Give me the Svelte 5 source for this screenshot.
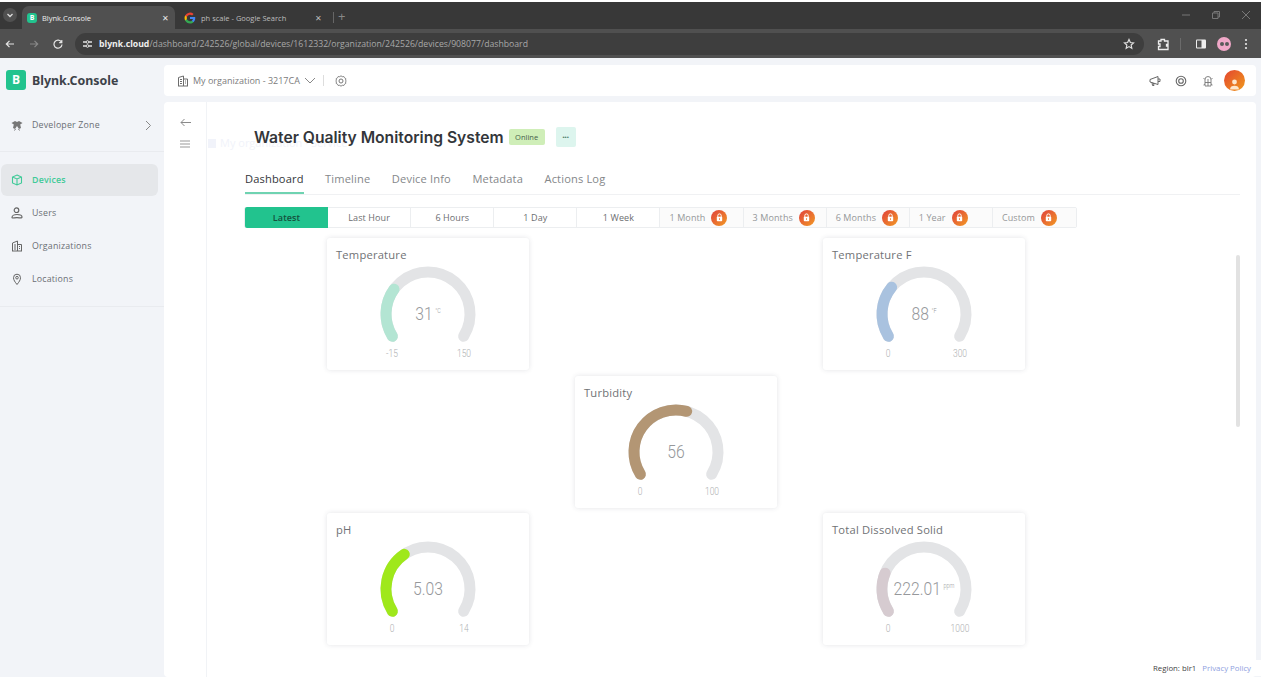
<script>
  const tabs = ['Dashboard', 'Timeline', 'Device Info', 'Metadata', 'Actions Log'];
  const ranges = [
    { label: 'Latest', active: true },
    { label: 'Last Hour' },
    { label: '6 Hours' },
    { label: '1 Day' },
    { label: '1 Week' },
    { label: '1 Month', locked: true },
    { label: '3 Months', locked: true },
    { label: '6 Months', locked: true },
    { label: '1 Year', locked: true },
    { label: 'Custom', locked: true }
  ];
  const gauges = [
    { title: 'Temperature', value: 31, text: '31', unit: '°C', min: -15, max: 150, color: '#b3e5d3', col: 1, row: 1 },
    { title: 'Temperature F', value: 88, text: '88', unit: '°F', min: 0, max: 300, color: '#a9c2df', col: 3, row: 1 },
    { title: 'Turbidity', value: 56, text: '56', unit: '', min: 0, max: 100, color: '#b39674', col: 2, row: 2 },
    { title: 'pH', value: 5.03, text: '5.03', unit: '', min: 0, max: 14, color: '#9fe81b', col: 1, row: 3 },
    { title: 'Total Dissolved Solid', value: 222.01, text: '222.01', unit: 'ppm', min: 0, max: 1000, color: '#d6cbd0', col: 3, row: 3 }
  ];

  const SWEEP = 244;
  const R = 42;
  const CX = 101;
  const CY = 38;

  function point(deg) {
    // deg runs clockwise along the gauge, 0 is the lower left end
    const a = ((148 + deg) * Math.PI) / 180;
    return `${(CX + R * Math.cos(a)).toFixed(2)} ${(CY + R * Math.sin(a)).toFixed(2)}`;
  }

  function arc(fraction) {
    const deg = SWEEP * fraction;
    return `M${point(0)} A${R} ${R} 0 ${deg > 180 ? 1 : 0} 1 ${point(deg)}`;
  }
</script>

<div class="chrome">
  <div class="tabstrip">
    <span class="tab-menu">
      <svg width="8" height="8" viewBox="0 0 8 8"><path d="M1.500 3l2.500 2.500L6.500 3" fill="none" stroke="#ddd" stroke-width="1.300"/></svg>
    </span>
    <div class="tab active">
      <span class="favicon">B</span>
      <span class="tab-title">Blynk.Console</span>
      <span class="tab-close">✕</span>
    </div>
    <div class="tab">
      <svg class="g" width="12" height="12" viewBox="0 0 24 24">
        <path d="M22.500 12.200c0-.8-.1-1.500-.2-2.200H12v4.200h5.900a5 5 0 0 1-2.200 3.300v2.700h3.500c2.100-1.900 3.300-4.700 3.300-8z" fill="#4285f4"/>
        <path d="M12 23c3 0 5.400-1 7.200-2.700l-3.500-2.700c-1 .7-2.200 1.100-3.700 1.100-2.800 0-5.300-1.900-6.100-4.500H2.300v2.800A11 11 0 0 0 12 23z" fill="#34a853"/>
        <path d="M5.900 14.200a6.600 6.600 0 0 1 0-4.300V7.100H2.300a11 11 0 0 0 0 9.900z" fill="#fbbc05"/>
        <path d="M12 5.400c1.600 0 3 .5 4.100 1.600l3.100-3.100A11 11 0 0 0 2.300 7.100l3.600 2.800C6.700 7.300 9.200 5.400 12 5.400z" fill="#ea4335"/>
      </svg>
      <span class="tab-title">ph scale - Google Search</span>
      <span class="tab-close dim">✕</span>
    </div>
    <span class="tab-sep"></span>
    <span class="tab-plus">+</span>
    <div class="window-btns">
      <svg width="10" height="10" viewBox="0 0 10 10"><path d="M1 5h8" stroke="#777" stroke-width="1"/></svg>
      <svg width="10" height="10" viewBox="0 0 10 10"><path d="M1.500 3h5.500v5.500h-5.500zM3 3V1.500h5.500V7H7" fill="none" stroke="#777" stroke-width="1"/></svg>
      <svg width="10" height="10" viewBox="0 0 10 10"><path d="M1 1l8 8M9 1l-8 8" stroke="#777" stroke-width="1"/></svg>
    </div>
  </div>
  <div class="toolbar">
    <svg width="10" height="10" viewBox="0 0 10 10"><path d="M9 5H1.500M4.500 1.800L1.300 5l3.200 3.200" fill="none" stroke="#e4e4e4" stroke-width="1.200"/></svg>
    <svg width="10" height="10" viewBox="0 0 10 10"><path d="M1 5h7.500M5.500 1.800L8.700 5 5.500 8.200" fill="none" stroke="#888" stroke-width="1.200"/></svg>
    <svg width="10" height="10" viewBox="0 0 10 10"><path d="M8.500 3.200A4 4 0 1 0 9 5.500M8.800 1v2.600H6.200" fill="none" stroke="#e4e4e4" stroke-width="1.200"/></svg>
    <div class="omnibox">
      <svg width="11" height="10" viewBox="0 0 11 10"><path d="M1 3h3M7 3h3M1 7h3M7 7h3" stroke="#e0e0e0" stroke-width="1.500"/><circle cx="5.500" cy="3" r="1.300" fill="none" stroke="#e0e0e0"/><circle cx="5.500" cy="7" r="1.300" fill="none" stroke="#e0e0e0"/></svg>
      <span class="url"><b>blynk.cloud</b>/dashboard/242526/global/devices/1612332/organization/242526/devices/908077/dashboard</span>
      <svg class="star" width="12" height="12" viewBox="0 0 24 24"><path d="M12 3l2.700 6 6.300.7-4.700 4.300 1.300 6.400L12 17.200l-5.600 3.200 1.300-6.400L3 9.700 9.300 9z" fill="none" stroke="#e0e0e0" stroke-width="2.400"/></svg>
    </div>
    <svg class="tool-ext" width="14" height="14" viewBox="0 0 14 14"><path d="M2.500 4H5V2.500h3.500V4H12v3.500h-1.500V9H12v3.500H2.500V9.500H4V7H2.500z" fill="none" stroke="#eee" stroke-width="1.300"/></svg>
    <span class="tool-sep"></span>
    <svg width="12" height="12" viewBox="0 0 12 12"><rect x="1" y="1.500" width="10" height="9" rx="1" fill="#eee"/><rect x="2" y="2.500" width="4.500" height="7" fill="#505050"/></svg>
    <span class="profile"><i></i><i></i></span>
    <svg class="tool-dots" width="4" height="12" viewBox="0 0 4 12"><circle cx="2" cy="2" r="1.100" fill="#e8e8e8"/><circle cx="2" cy="6" r="1.100" fill="#e8e8e8"/><circle cx="2" cy="10" r="1.100" fill="#e8e8e8"/></svg>
  </div>
</div>

<div class="page">
  <aside class="sidebar">
    <div class="brand">
      <span class="logo">B</span>
      <span class="brand-name">Blynk.Console</span>
    </div>
    <div class="nav-zone">
      <a class="nav-item">
        <svg class="nav-icon" width="12" height="11" viewBox="0 0 12 11"><path d="M.5 3L4 1l2 1 2-1 3.500 2-2.300 1.500L10 8 8 9 6 6 4 9 2 8l.8-3.500z" fill="#777"/><path d="M4.500 9l-1 1.500M7.500 9l1 1.500" stroke="#777"/></svg>
        <span>Developer Zone</span>
        <svg class="nav-chevron" width="7" height="11" viewBox="0 0 7 11"><path d="M1 1l4.500 4.500L1 10" fill="none" stroke="#888" stroke-width="1"/></svg>
      </a>
    </div>
    <nav class="nav-main">
      <a class="nav-item current">
        <svg class="nav-icon" width="12" height="12" viewBox="0 0 12 12"><path d="M6 1l4.500 2v6L6 11 1.500 9V3zM1.500 3L6 5l4.500-2M6 5v6" fill="none" stroke="#3fca98" stroke-width="1.100"/></svg>
        <span>Devices</span>
      </a>
      <a class="nav-item">
        <svg class="nav-icon" width="12" height="12" viewBox="0 0 12 12"><circle cx="5.500" cy="3.200" r="2.300" fill="none" stroke="#666" stroke-width="1.200"/><path d="M1 10.500c0-2 2.500-3 5-3s5 1 5 2.500-2 .7-5 .7-5 .8-5-.2z" fill="none" stroke="#666" stroke-width="1.200"/></svg>
        <span>Users</span>
      </a>
      <a class="nav-item">
        <svg class="nav-icon" width="12" height="12" viewBox="0 0 12 12"><path d="M1.500 11V3l5-2v10M6.500 4.500h4V11M1 11h10M3 5h2M3 7h2M3 9h2M8 6.500h1M8 8.500h1" fill="none" stroke="#666" stroke-width="1"/></svg>
        <span>Organizations</span>
      </a>
      <a class="nav-item">
        <svg class="nav-icon" width="12" height="12" viewBox="0 0 12 12"><path d="M6 11.500C4 9 2.500 7 2.500 4.700a3.500 3.500 0 0 1 7 0C9.500 7 8 9 6 11.500z" fill="none" stroke="#666"/><circle cx="6" cy="4.700" r="1.300" fill="none" stroke="#666"/></svg>
        <span>Locations</span>
      </a>
    </nav>
  </aside>

  <div class="workspace">
    <header class="topbar">
      <svg width="12" height="12" viewBox="0 0 12 12"><path d="M1.500 11V2.500l5-1.500v10M6.500 4h4v7M1 11h10M3 4.500h2M3 6.500h2M3 8.500h2M8 6h1M8 8h1" fill="none" stroke="#6c6c6c" stroke-width="1"/></svg>
      <span class="org-name">My organization - 3217CA</span>
      <svg width="12" height="7" viewBox="0 0 12 7"><path d="M1 1l5 5 5-5" fill="none" stroke="#888" stroke-width="1"/></svg>
      <span class="top-sep"></span>
      <svg width="12" height="12" viewBox="0 0 12 12"><circle cx="6" cy="6" r="2" fill="none" stroke="#777"/><path d="M6 .8l1.300.9 1.500-.2.700 1.300 1.300.8-.2 1.500.6.900-.6.900.2 1.500-1.300.8-.7 1.300-1.500-.2-1.300.9-1.300-.9-1.500.2-.7-1.300-1.300-.8.200-1.500-.6-.9.6-.9-.2-1.500 1.300-.8.7-1.300 1.500.2z" fill="none" stroke="#777" stroke-width=".9"/></svg>
      <div class="top-actions">
        <svg width="12" height="12" viewBox="0 0 12 12"><path d="M1 4.500l8-3v8l-8-2.500zM3 7.500l.5 3h1.500L4.500 8M9 4h2v2.500H9" fill="none" stroke="#666" stroke-width="1"/></svg>
        <svg width="12" height="12" viewBox="0 0 12 12"><circle cx="6" cy="6" r="4.800" fill="none" stroke="#666" stroke-width="1.100"/><circle cx="6" cy="6" r="2.300" fill="none" stroke="#666" stroke-width="1.100"/></svg>
        <svg width="12" height="12" viewBox="0 0 12 12"><path d="M3 4.500a3 3 0 0 1 6 0V11H3zM3 7.500h6M6 4v7M1.500 3l1.500 1.500M10.500 3L9 4.500M1.500 10L3 9M10.500 10L9 9" fill="none" stroke="#777" stroke-width=".9"/></svg>
        <span class="avatar">
          <svg width="11" height="13" viewBox="0 0 11 13"><circle cx="5.500" cy="4" r="2.400" fill="#fde6cc"/><path d="M1 11.500c0-2.800 2-3.800 4.500-3.800s4.500 1 4.500 3.800z" fill="#fde6cc"/></svg>
        </span>
      </div>
    </header>

    <main class="panel">
      <div class="rail">
        <svg width="11" height="9" viewBox="0 0 11 9"><path d="M11 4.500H1M4.500 1L1 4.500 4.500 8" fill="none" stroke="#8a8a8a" stroke-width="1"/></svg>
        <svg width="10" height="8" viewBox="0 0 10 8"><path d="M0 1h10M0 4h10M0 7h10" stroke="#999" stroke-width="1"/></svg>
      </div>
      <div class="content">
        <div class="crumb-ghost">
          <svg width="10" height="10" viewBox="0 0 10 10"><rect x="1" y="1" width="8" height="9" fill="#f1f3fa"/></svg>
          <span>My organization · Service</span>
        </div>
        <div class="title-row">
          <h1>Water Quality Monitoring System</h1>
          <span class="badge">Online</span>
          <button class="more">•••</button>
        </div>
        <div class="tabs">
          {#each tabs as tab, i}
            <span class="tab-link" class:selected={i === 0}>{tab}</span>
          {/each}
        </div>
        <div class="ranges">
          {#each ranges as range}
            <div class="range" class:on={range.active} class:locked={range.locked}>
              <span>{range.label}</span>
              {#if range.locked}
                <span class="lock">
                  <svg width="7" height="9" viewBox="0 0 7 9"><path d="M1.800 4V2.600a1.700 1.700 0 0 1 3.400 0V4" fill="none" stroke="#fff" stroke-width="1"/><rect x=".8" y="3.800" width="5.400" height="4.400" rx=".8" fill="#fff"/><rect x="3" y="5.300" width="1" height="1.500" fill="#ee7b33"/></svg>
                </span>
              {/if}
            </div>
          {/each}
        </div>
        <div class="widgets">
          {#each gauges as g}
            <section class="widget" style:grid-column={g.col} style:grid-row={g.row}>
              <h2>{g.title}</h2>
              <svg class="gauge" width="202" height="98" viewBox="0 0 202 98">
                <path d={arc(1)} class="track" />
                <path d={arc((g.value - g.min) / (g.max - g.min))} class="fill" style:stroke={g.color} />
                <text x={CX} y="44.500" class="reading">{g.text}{#if g.unit}<tspan class="unit" dx="3" dy="-7">{g.unit}</tspan>{/if}</text>
                <text x="65" y="81" class="limit">{g.min}</text>
                <text x="137" y="81" class="limit">{g.max}</text>
              </svg>
            </section>
          {/each}
        </div>
        <div class="scrollbar"></div>
      </div>
    </main>
    <footer class="legal">
      <span>Region: blr1</span>
      <a>Privacy Policy</a>
    </footer>
  </div>
</div>

<style>
  :global(body) {
    margin: 0;
    overflow: hidden;
    background: #f2f4f8;
    font-family: "Open Sans", "Liberation Sans", sans-serif;
  }

  /* browser frame */
  .chrome {
    height: 58px;
    padding-top: 2px;
    background: #fff;
    box-sizing: border-box;
  }

  .tabstrip {
    height: 27px;
    background: #383838;
    display: flex;
    align-items: flex-end;
    color: #ddd;
    font-size: 7.500px;
    font-family: "Open Sans", sans-serif;
  }

  .tab-menu {
    width: 14px;
    height: 14px;
    margin: 0 5px 7px 3px;
    border-radius: 50%;
    background: #505050;
    display: flex;
    align-items: center;
    justify-content: center;
  }

  .tab {
    width: 153px;
    height: 23px;
    padding: 0 6px 0 5px;
    box-sizing: border-box;
    display: flex;
    align-items: center;
    gap: 5px;
    border-radius: 7px 7px 0 0;
    color: #bdbdbd;
  }

  .tab.active {
    background: #505050;
    color: #eee;
  }

  .favicon {
    width: 10px;
    height: 10px;
    border-radius: 3px;
    background: #22c38e;
    color: #fff;
    font-size: 7px;
    font-weight: 700;
    line-height: 10px;
    text-align: center;
  }

  .tab .g {
    margin-left: 4px;
  }

  .tab-title {
    flex: 1;
  }

  .tab-close {
    font-size: 8px;
    color: #e8e8e8;
  }

  .tab-close.dim {
    color: #bbb;
  }

  .tab-sep {
    width: 1px;
    height: 11px;
    background: #666;
    margin: 0 0 6px 5px;
  }

  .tab-plus {
    font-size: 13px;
    line-height: 15px;
    margin: 0 0 5px 4px;
    color: #888;
  }

  .window-btns {
    margin: 0 10px 9px auto;
    display: flex;
    gap: 20px;
  }

  .toolbar {
    height: 29px;
    background: #505050;
    display: flex;
    align-items: center;
    gap: 14px;
    padding: 0 13px 0 5px;
  }

  .omnibox {
    flex: 1;
    height: 22px;
    margin-left: -2px;
    border-radius: 11px;
    background: #3e3e3e;
    display: flex;
    align-items: center;
    padding: 0 9px 0 7px;
    gap: 6px;
    font-size: 8.700px;
    color: #a8a8a8;
  }

  .url b {
    color: #eee;
    font-weight: 700;
  }

  .star {
    margin-left: auto;
  }

  .tool-ext {
    margin-left: -2px;
  }

  .tool-sep {
    width: 1px;
    height: 12px;
    background: #6b6b6b;
    margin-left: -4px;
  }

  .profile {
    width: 14px;
    height: 14px;
    margin-left: -4px;
    border-radius: 50%;
    background: #f0a8c8;
    display: flex;
    align-items: center;
    justify-content: center;
    gap: 1px;
  }

  .profile i {
    width: 4px;
    height: 4px;
    border-radius: 50%;
    background: #5a5a5a;
  }

  .tool-dots {
    margin-left: -1px;
  }

  /* page */
  .page {
    height: 619px;
    display: grid;
    grid-template-columns: 164px 1fr;
  }

  .sidebar {
    background: #f2f4f8;
    font-size: 8.800px;
    color: #6a6e74;
  }

  .brand {
    height: 44px;
    padding: 0 0 0 6px;
    display: flex;
    align-items: center;
    gap: 6px;
  }

  .logo {
    width: 20px;
    height: 20px;
    border-radius: 3px;
    background: #22c38e;
    color: #fff;
    font-size: 12px;
    font-weight: 700;
    line-height: 20px;
    text-align: center;
  }

  .brand-name {
    font-size: 12.400px;
    font-weight: 700;
    color: #3d4249;
    font-family: "Noto Sans", sans-serif;
  }

  .nav-zone {
    padding: 7px 0 10px;
    border-bottom: 1px solid #e9ebef;
  }

  .nav-main {
    margin-top: 12px;
    padding-bottom: 11px;
    border-bottom: 1px solid #e9ebef;
    display: flex;
    flex-direction: column;
    gap: 1px;
  }

  .nav-item {
    height: 32px;
    margin: 0 6px 0 1px;
    padding: 0 5px 0 10px;
    display: flex;
    align-items: center;
    gap: 9px;
    border-radius: 6px;
    letter-spacing: 0.2px;
  }

  .nav-item.current {
    background: #e5e7ea;
    color: #3fca98;
    font-weight: 600;
  }

  .nav-icon {
    flex: none;
  }

  .nav-chevron {
    margin-left: auto;
    margin-right: 1px;
  }

  .workspace {
    position: relative;
    min-width: 0;
    padding: 7px 5px 0 0;
    display: flex;
    flex-direction: column;
    gap: 6px;
  }

  .topbar {
    height: 31px;
    flex: none;
    background: #fff;
    border-radius: 4px;
    display: flex;
    align-items: center;
    padding: 0 11px 0 13px;
    gap: 4px;
    font-size: 9px;
    color: #7b7b7b;
  }

  .top-sep {
    width: 1px;
    height: 11px;
    background: #ddd;
    margin: 0 7px 0 3px;
  }

  .top-actions {
    margin-left: auto;
    display: flex;
    align-items: center;
    gap: 14.500px;
  }

  .avatar {
    width: 21px;
    height: 21px;
    margin-left: -4px;
    border-radius: 50%;
    background: linear-gradient(135deg, #e3452f, #f09a1c);
    display: flex;
    align-items: flex-end;
    justify-content: center;
  }

  .panel {
    flex: 1;
    min-height: 0;
    background: #fff;
    border-radius: 4px;
    display: flex;
  }

  .rail {
    width: 43px;
    flex: none;
    border-right: 1px solid #f1f3f6;
    box-sizing: border-box;
    padding-top: 16px;
    display: flex;
    flex-direction: column;
    align-items: center;
    gap: 13px;
  }

  .content {
    position: relative;
    flex: 1;
    min-width: 0;
    padding: 25px 16px 0 38px;
  }

  .crumb-ghost {
    position: absolute;
    left: 0;
    top: 33px;
    display: flex;
    align-items: center;
    gap: 3px;
    font-size: 11px;
    color: #f1f3fa;
  }

  .title-row {
    position: relative;
    height: 20px;
    margin-left: 9px;
    display: flex;
    align-items: center;
  }

  h1 {
    margin: 0 5px 0 0;
    font-size: 15.650px;
    font-weight: 600;
    color: #33363a;
    font-family: "Inter", sans-serif;
    white-space: nowrap;
  }

  .badge {
    width: 36px;
    height: 16px;
    border-radius: 2px;
    background: #cfeeb8;
    color: #46604a;
    font-size: 7.500px;
    line-height: 16px;
    text-align: center;
  }

  .more {
    width: 20px;
    height: 20px;
    margin-left: 11px;
    padding: 0;
    border: 0;
    border-radius: 2px;
    background: #ddf5ee;
    color: #55806f;
    font-size: 6px;
  }

  .tabs {
    margin-top: 18px;
    height: 29px;
    display: flex;
    gap: 21.500px;
    border-bottom: 1px solid #f0f1f3;
    font-size: 11.100px;
    color: #85878a;
    letter-spacing: 0.15px;
  }

  .tab-link {
    line-height: 27px;
    height: 29px;
    box-sizing: border-box;
  }

  .tab-link.selected {
    color: #33363a;
    border-bottom: 2px solid #6fd3b1;
  }

  .ranges {
    margin: 12px 0 0 -1px;
    width: 833px;
    height: 21px;
    display: grid;
    grid-template-columns: repeat(10, 1fr);
    border: 1px solid #eceef0;
    border-radius: 2px;
    box-sizing: border-box;
    font-size: 9px;
    color: #6c6e70;
  }

  .range {
    display: flex;
    align-items: center;
    justify-content: center;
    gap: 6px;
    border-right: 1px solid #eceef0;
    letter-spacing: 0.1px;
  }

  .range:last-child {
    border-right: 0;
  }

  .range.on {
    margin: -1px 0;
    background: #22c38e;
    border-radius: 2px 0 0 2px;
    border-right: 0;
    color: #14513d;
    font-weight: 600;
  }

  .range.locked {
    justify-content: flex-start;
    padding-left: 9px;
    background: #fbfbfb;
    color: #959799;
  }

  .lock {
    width: 16px;
    height: 16px;
    border-radius: 50%;
    background: linear-gradient(135deg, #e0403c, #f29a24);
    display: flex;
    align-items: center;
    justify-content: center;
  }

  .widgets {
    margin: 10px 0 0 82px;
    display: grid;
    grid-template-columns: repeat(3, 202px);
    grid-auto-rows: 132px;
    column-gap: 46px;
    row-gap: 5.500px;
  }

  .widget {
    background: #fff;
    border-radius: 3px;
    box-shadow: 0 0 5px rgba(40, 50, 70, 0.13);
    overflow: hidden;
  }

  h2 {
    margin: 0;
    padding: 9px 9px 0;
    height: 26px;
    box-sizing: border-box;
    font-size: 11.200px;
    line-height: 16px;
    font-weight: 400;
    color: #707275;
    letter-spacing: 0.2px;
  }

  .gauge {
    display: block;
    margin-top: 12px;
    overflow: visible;
  }

  .gauge path {
    fill: none;
    stroke-width: 11;
    stroke-linecap: round;
  }

  .track {
    stroke: #e3e4e6;
  }

  .gauge text {
    font-family: Roboto, sans-serif;
    font-weight: 300;
    fill: #96989b;
    text-anchor: middle;
    transform-box: fill-box;
    transform-origin: center;
    transform: scaleX(0.85);
  }

  .reading {
    font-size: 18.500px;
  }

  .unit {
    font-size: 6.500px;
  }

  .gauge .limit {
    font-size: 10px;
    fill: #aeb0b2;
  }

  .scrollbar {
    position: absolute;
    right: 16px;
    top: 153px;
    width: 4px;
    height: 172px;
    border-radius: 2px;
    background: #e2e2e2;
  }

  .legal {
    position: absolute;
    right: 0;
    bottom: 1px;
    width: 116px;
    height: 16px;
    background: #fff;
    display: flex;
    align-items: center;
    gap: 6px;
    padding-left: 8px;
    box-sizing: border-box;
    font-size: 7.800px;
    color: #444;
  }

  .legal a {
    color: #8ea0e0;
  }
</style>
